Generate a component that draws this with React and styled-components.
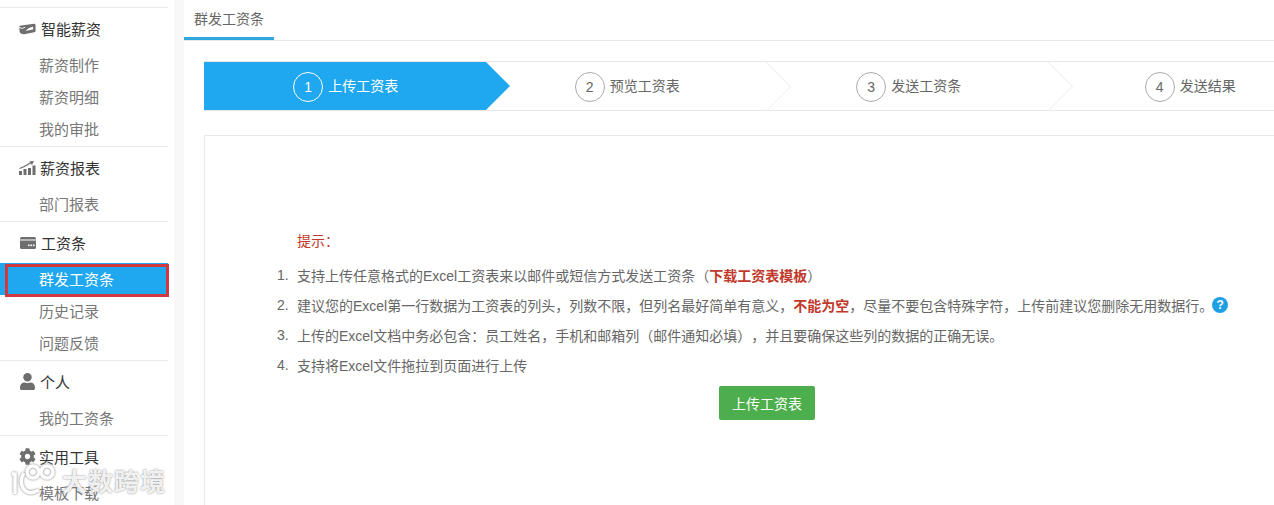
import React from 'react'
import styled, { createGlobalStyle } from 'styled-components'
import { FaUser, FaCog } from 'react-icons/fa'

const GlobalStyle = createGlobalStyle`
    html, body {
        margin: 0;
        padding: 0;
        background: #fff;
        font-family: "Liberation Sans", "Noto Sans CJK SC", sans-serif;
    }
`

const Page = styled.div`
    position: relative;
    display: flex;
    width: 1274px;
    height: 505px;
    overflow: hidden;
    background: #fff;
`

const Sidebar = styled.aside`
    flex: 0 0 174px;
    padding-top: 7px;
    box-sizing: border-box;
    background: #fff;
`

const Gutter = styled.div`
    flex: 0 0 10px;
    background: #f8f8f8;
`

const Group = styled.div`
    width: 168px;
    padding-bottom: 1px;
    border-top: 1px solid #e9e9e9;
`

const GroupHead = styled.div`
    display: flex;
    align-items: center;
    height: 41px;
    padding-left: 19px;
    font-size: 15px;
    color: #333;
`

const IconBox = styled.span`
    display: flex;
    align-items: center;
    justify-content: center;
    width: 17px;
    margin-right: ${p => p.$gap || 4}px;
    color: #6e6e6e;
`

const NavItem = styled.div`
    position: relative;
    height: 32px;
    line-height: 33px;
    padding-left: 39px;
    font-size: 15px;
    color: ${p => (p.$active ? '#fff' : '#777')};
    background: ${p => (p.$active ? '#1fa8f0' : 'transparent')};

    ${p => p.$active && `
        &::after {
            content: "";
            position: absolute;
            left: 5px;
            right: -1px;
            top: 1px;
            bottom: -2px;
            border: 3px solid #d0393f;
            box-sizing: border-box;
        }
    `}
`

const Main = styled.main`
    flex: 0 0 1150px;
`

const TabBar = styled.div`
    height: 40px;
    border-bottom: 1px solid #e8e8e8;
`

const Tab = styled.div`
    width: 90px;
    height: 40px;
    box-sizing: border-box;
    padding-left: 10px;
    line-height: 38px;
    font-size: 14px;
    color: #666;
    border-bottom: 3px solid #2ea7e0;
`

const Content = styled.div`
    width: 1126px;
    padding: 20px 20px 0;
`

const Stepper = styled.div`
    display: grid;
    grid-template-columns: repeat(4, 281.5px);
    height: 48px;
    border-top: 1px solid #e8e8e8;
    border-bottom: 1px solid #e8e8e8;
`

const Step = styled.div`
    position: relative;
    display: flex;
    align-items: center;
    justify-content: center;
    padding-left: 2px;
    background: ${p => (p.$active ? '#1fa8f0' : 'transparent')};
    color: ${p => (p.$active ? '#fff' : '#666')};
    font-size: 14px;

    &::after {
        content: "";
        position: absolute;
        z-index: 1;
        top: 7px;
        right: -17px;
        width: 34px;
        height: 34px;
        transform: rotate(45deg);
        background: ${p => (p.$active ? '#1fa8f0' : 'transparent')};
        border-top: ${p => (p.$active ? '0' : '1px solid #f0f0f0')};
        border-right: ${p => (p.$active ? '0' : '1px solid #f0f0f0')};
    }
`

const StepNum = styled.span`
    display: flex;
    align-items: center;
    justify-content: center;
    width: 30px;
    height: 30px;
    margin: 1px 5px 0 0;
    box-sizing: border-box;
    border-radius: 50%;
    border: 1px solid ${p => (p.$active ? '#fff' : '#aaa')};
    font-size: 14px;
`

const StepLabel = styled.span`
    padding-bottom: 3px;
`

const Card = styled.section`
    margin-top: 24px;
    height: 400px;
    box-sizing: border-box;
    padding: 91px 0 0 72px;
    border: 1px solid #e8e8e8;
    font-size: 14px;
    color: #666;
`

const Hint = styled.div`
    padding-left: 20px;
    height: 33px;
    line-height: 28px;
    color: #c0392b;
`

const TipRow = styled.div`
    display: flex;
    align-items: center;
    height: 30px;
    white-space: nowrap;
`

const TipNum = styled.span`
    flex: 0 0 20px;
`

// 全角括号在这个字体里才居中
const Paren = styled.span`
    font-family: "Noto Sans CJK TC", sans-serif;
`

const Strong = styled.b`
    color: #c0392b;
    font-weight: 700;
`

const HelpIcon = styled.span`
    display: inline-flex;
    align-items: center;
    justify-content: center;
    width: 16px;
    height: 16px;
    margin-left: -1px;
    border-radius: 50%;
    background: #1fa0e6;
    color: #fff;
    font-size: 12px;
    font-weight: 700;
`

const ButtonRow = styled.div`
    display: flex;
    justify-content: center;
    margin: 6px 0 0 -72px;
`

const UploadButton = styled.button`
    width: 96px;
    height: 34px;
    border: 0;
    border-radius: 2px;
    background: #4cae4c;
    color: #fff;
    font-family: inherit;
    font-size: 14px;
`

const Watermark = styled.div`
    position: absolute;
    left: 9px;
    top: 462px;
    display: flex;
    align-items: center;
    gap: 5px;
    color: rgba(255, 255, 255, 0.9);
    font-size: 25px;
    font-weight: 700;
    letter-spacing: 1px;
    text-shadow: 0 0 2px rgba(110, 110, 110, 0.9);
    pointer-events: none;
`

const CardLeafIcon = () => (
    <svg width="18" height="12" viewBox="0 0 18 12" fill="#6e6e6e">
        <path d="M0.5 2.5 L16 0.5 Q17.5 0.5 17.5 2 V8 Q17.5 9.5 16 9.5 L5.5 11.5 Q1 11.5 0.5 8 Z M7 8.5 Q9.5 4 15 3.5 L15 6.5 L9 7.5 Z" fillRule="evenodd" />
        <path d="M0.5 4.5 Q4 6.5 6.5 4" stroke="#fff" strokeWidth="1" fill="none" />
    </svg>
)

const ChartIcon = () => (
    <svg width="17" height="14" viewBox="0 0 17 14" fill="#6e6e6e">
        <rect x="0" y="10" width="3" height="4" />
        <rect x="4.5" y="8" width="3" height="6" />
        <rect x="9" y="7" width="3" height="7" />
        <rect x="13.5" y="4.5" width="3" height="9.5" />
        <path d="M0.5 7.5 Q6 5.5 11.5 2" stroke="#6e6e6e" strokeWidth="1.3" fill="none" />
        <path d="M10 0.5 L15 0 L13 4 Z" />
    </svg>
)

const TicketIcon = () => (
    <svg width="16" height="12" viewBox="0 0 16 12">
        <rect x="0" y="0" width="16" height="12" rx="1.5" fill="#6e6e6e" />
        <rect x="0" y="2.5" width="16" height="1" fill="#fff" />
        <rect x="8" y="7.5" width="1.6" height="1.6" fill="#fff" />
        <rect x="10.5" y="7.5" width="1.6" height="1.6" fill="#fff" />
        <rect x="13" y="7.5" width="1.6" height="1.6" fill="#fff" />
    </svg>
)

const LogoMark = () => (
    <svg width="48" height="34" viewBox="0 0 48 34" fill="none" stroke="#fff" strokeWidth="3.5" style={{ filter: 'drop-shadow(0 0 1px #777)' }}>
        <path d="M3 11 L6 11 L6 31" />
        <path d="M30 27 Q19 33 14 25 Q10 17 15 10" />
        <circle cx="24" cy="9" r="6" />
        <circle cx="38" cy="9" r="6" />
    </svg>
)

const menu = [
    { title: '智能薪资', icon: <CardLeafIcon />, gap: 5, items: ['薪资制作', '薪资明细', '我的审批'] },
    { title: '薪资报表', icon: <ChartIcon />, gap: 4, items: ['部门报表'] },
    { title: '工资条', icon: <TicketIcon />, gap: 5, items: ['群发工资条', '历史记录', '问题反馈'] },
    { title: '个人', icon: <FaUser size={17} />, gap: 4, items: ['我的工资条'] },
    { title: '实用工具', icon: <FaCog size={17} />, gap: 3, items: ['模板下载'] },
]

const steps = ['上传工资表', '预览工资表', '发送工资条', '发送结果']

export default function App() {
    return (
        <Page>
            <GlobalStyle />
            <Sidebar>
                {menu.map((group) => (
                    <Group key={group.title}>
                        <GroupHead>
                            <IconBox $gap={group.gap}>{group.icon}</IconBox>
                            {group.title}
                        </GroupHead>
                        {group.items.map((item) => (
                            <NavItem key={item} $active={item === '群发工资条'}>{item}</NavItem>
                        ))}
                    </Group>
                ))}
            </Sidebar>
            <Gutter />
            <Main>
                <TabBar>
                    <Tab>群发工资条</Tab>
                </TabBar>
                <Content>
                    <Stepper>
                        {steps.map((step, i) => (
                            <Step key={step} $active={i === 0}>
                                <StepNum $active={i === 0}>{i + 1}</StepNum>
                                <StepLabel>{step}</StepLabel>
                            </Step>
                        ))}
                    </Stepper>
                    <Card>
                        <Hint>提示：</Hint>
                        <TipRow>
                            <TipNum>1.</TipNum>
                            支持上传任意格式的Excel工资表来以邮件或短信方式发送工资条<Paren>（</Paren><Strong>下载工资表模板</Strong><Paren>）</Paren>
                        </TipRow>
                        <TipRow>
                            <TipNum>2.</TipNum>
                            建议您的Excel第一行数据为工资表的列头，列数不限，但列名最好简单有意义，<Strong>不能为空</Strong>，尽量不要包含特殊字符，上传前建议您删除无用数据行。
                            <HelpIcon>?</HelpIcon>
                        </TipRow>
                        <TipRow>
                            <TipNum>3.</TipNum>
                            上传的Excel文档中务必包含：员工姓名，手机和邮箱列<Paren>（</Paren>邮件通知必填<Paren>）</Paren>，并且要确保这些列的数据的正确无误。
                        </TipRow>
                        <TipRow>
                            <TipNum>4.</TipNum>
                            支持将Excel文件拖拉到页面进行上传
                        </TipRow>
                        <ButtonRow>
                            <UploadButton>上传工资表</UploadButton>
                        </ButtonRow>
                    </Card>
                </Content>
            </Main>
            <Watermark>
                <LogoMark />
                大数跨境
            </Watermark>
        </Page>
    )
}
